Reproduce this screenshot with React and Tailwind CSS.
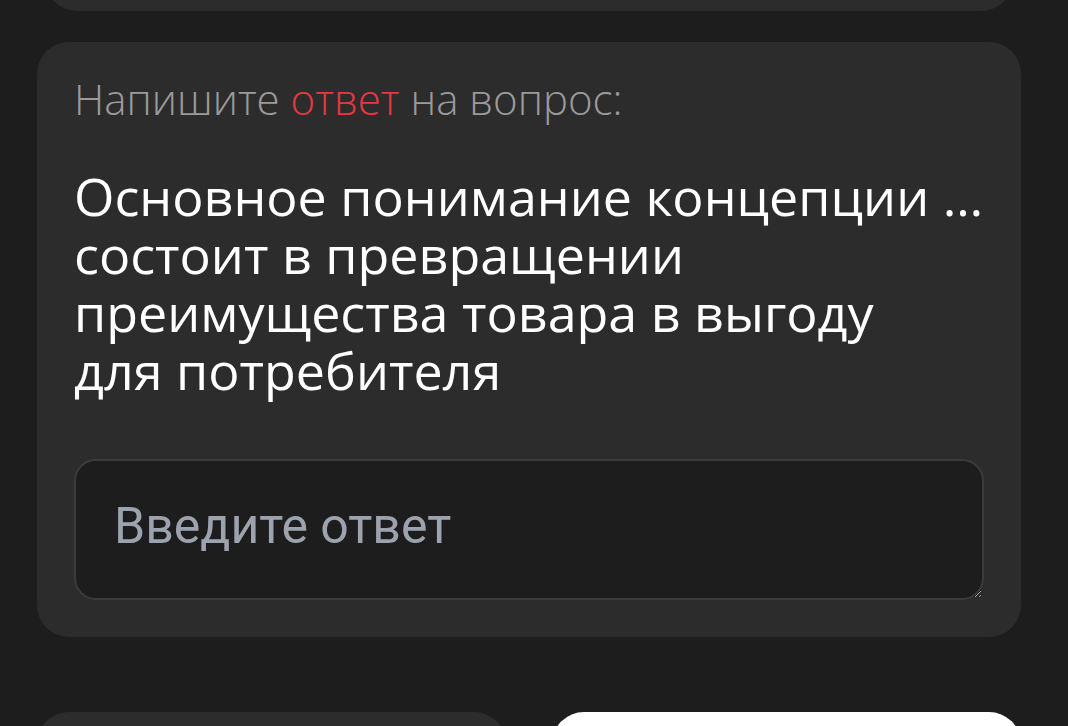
import { useState } from "react";

// неразрывный пробел держит «для потребителя» на одной строке
const QUESTION =
  "Основное понимание концепции … состоит в превращении преимущества товара в выгоду для\u00a0потребителя";

function QuestionCard() {
  const [answer, setAnswer] = useState("");

  return (
    <section className="rounded-[32px] bg-[#2c2c2c] px-[37px] pb-[37px] pt-[32px]">
      <p className="font-['Open_Sans',sans-serif] text-[42px] font-light leading-[50px] text-[#9b9b9b]">
        Напишите <span className="text-[#e5393f]">ответ</span> на вопрос:
      </p>

      <h2 className="mt-[43px] font-['Open_Sans',sans-serif] text-[52px] font-normal leading-[58px] text-white">
        {QUESTION}
      </h2>

      <textarea
        value={answer}
        onChange={(e) => setAnswer(e.target.value)}
        placeholder="Введите ответ"
        rows={1}
        className="mt-[60px] block h-[141px] w-full rounded-[22px] border-2 border-[#3b3b3b] bg-[#1d1d1d] px-[38px] pt-[36px] font-['Roboto',sans-serif] text-[50px] leading-[58px] text-white outline-none placeholder:text-[#9ca3af]"
      />
    </section>
  );
}

export default function App() {
  return (
    <div className="h-[726px] overflow-hidden bg-[#1d1d1d]">
      <div className="-mt-[60px] pl-[37px] pr-[47px]">
        {/* предыдущая карточка, видна только её нижняя часть */}
        <div className="mx-[8px] h-[71px] rounded-b-[32px] bg-[#2c2c2c]" />

        <div className="mt-[31px]">
          <QuestionCard />
        </div>

        <div className="mt-[75px] grid grid-cols-2 gap-[46px]">
          <button className="h-[80px] rounded-t-[32px] bg-[#2c2c2c]" />
          <button className="h-[80px] rounded-t-[32px] bg-white" />
        </div>
      </div>
    </div>
  );
}
